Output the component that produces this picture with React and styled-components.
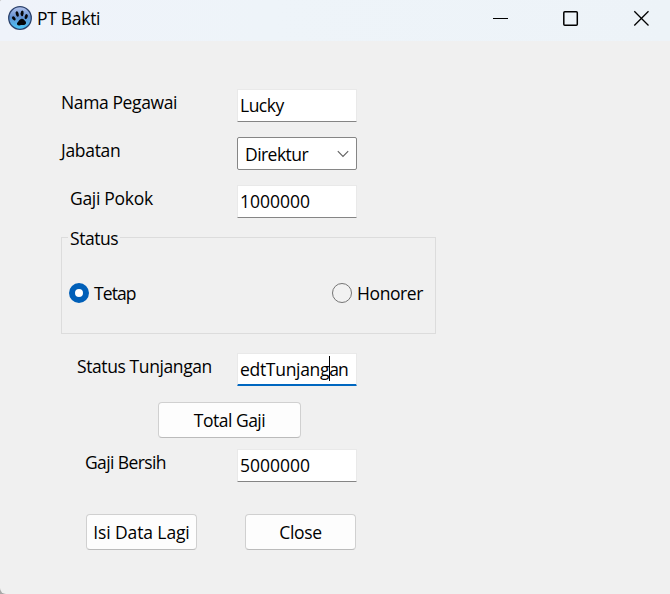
import React from "react";
import styled, { createGlobalStyle } from "styled-components";

const GlobalStyle = createGlobalStyle`
  *, *::before, *::after { box-sizing: border-box; }
  html, body { margin: 0; padding: 0; background: #a8a8a8; }
  body { font-family: "Open Sans", "Noto Sans", sans-serif; font-size: 17.5px; line-height: 24px; color: #000; }
`;

const Window = styled.div`
  width: 670px;
  height: 594px;
  background: #f0f0f0;
  border-radius: 2px 0 0 6px;
  overflow: hidden;
`;

const TitleBar = styled.header`
  display: flex;
  align-items: center;
  height: 41px;
  padding: 0 0 5px 8px;
  background: linear-gradient(90deg, #eff3fa, #eef4f9 40%, #edf3f8);
`;

const Text = styled.span`
  display: block;
  white-space: nowrap;
  letter-spacing: ${({ $track = -0.3 }) => $track}px;
`;

const Title = styled(Text)`
  flex: 1;
  margin-left: 5px;
`;

const Controls = styled.div`
  display: flex;
  margin-right: -6px;
`;

const Control = styled.button`
  display: flex;
  align-items: center;
  justify-content: center;
  width: 70px;
  height: 36px;
  padding: 0;
  border: 0;
  background: transparent;
`;

const Form = styled.main`
  display: flex;
  flex-direction: column;
  width: 436px;
  padding: 48px 0 0 61px;
`;

const Row = styled.div`
  display: flex;
  align-items: flex-start;
  height: 33px;
  margin-bottom: ${({ $after = 15 }) => $after}px;
`;

const LabelCell = styled.label`
  width: 176px;
  padding: 1px 0 0 ${({ $indent = 0 }) => $indent}px;
`;

const Field = styled.div`
  display: flex;
  align-items: flex-start;
  width: 120px;
  height: 33px;
  padding: 3px 0 0 2px;
  background: #fff;
  border: 1px solid #e9e9e9;
  border-bottom: ${({ $focused }) => ($focused ? "2px solid #0067c0" : "1px solid #858585")};
  border-radius: 1px;
`;

const Caret = styled.span`
  width: 1px;
  height: 25px;
  margin: -1px -1px 0 0;
  background: #000;
`;

const Combo = styled.div`
  display: flex;
  align-items: center;
  justify-content: space-between;
  width: 120px;
  height: 33px;
  padding: 0 7px 0 7px;
  background: #fff;
  border: 1px solid #868686;
  border-radius: 2px;
`;

const GroupBox = styled.fieldset`
  display: flex;
  flex-direction: column;
  height: 109px;
  min-width: 0;
  margin: -8px 0 19px;
  padding: 32px 12px 0 7px;
  border: 1px solid #dcdcdc;
`;

const Legend = styled.legend`
  height: 24px;
  margin-left: -1px;
  padding: 1px 2px 0;
`;

const RadioRow = styled.div`
  display: flex;
  justify-content: space-between;
`;

const Option = styled.label`
  display: flex;
  align-items: center;
  gap: 5px;
`;

const Radio = styled.span`
  width: 20px;
  height: 20px;
  margin-bottom: 1px;
  border-radius: 50%;
  border: ${({ $checked }) => ($checked ? "6px solid #005fb8" : "1px solid #757575")};
  background: ${({ $checked }) => ($checked ? "#fff" : "#f2f2f2")};
`;

const Button = styled.button`
  display: flex;
  align-items: center;
  justify-content: center;
  width: ${({ $width = 111 }) => $width}px;
  height: 36px;
  padding: 0;
  background: #fdfdfd;
  border: 1px solid #d0d0d0;
  border-bottom-color: #bbb;
  border-radius: 4px;
  font: inherit;
  color: #000;
`;

const TotalRow = styled.div`
  display: flex;
  padding-left: 97px;
  margin: 1px 0 11px;
`;

const Actions = styled.div`
  display: flex;
  gap: 48px;
  padding-left: 25px;
`;

const PawIcon = () => (
  <svg width="24" height="24" viewBox="0 0 24 24">
    <defs>
      <linearGradient id="orb" x1="0" y1="0" x2="0" y2="1">
        <stop offset="0" stopColor="#b4c3ec" />
        <stop offset="0.45" stopColor="#6490d0" />
        <stop offset="1" stopColor="#48c8fa" />
      </linearGradient>
    </defs>
    <circle cx="12" cy="12" r="11.3" fill="url(#orb)" stroke="#2b426c" strokeWidth="1.3" />
    <g fill="#050609">
      <ellipse cx="5.800" cy="12.400" rx="1.500" ry="2.300" transform="rotate(-40 5.800 12.400)" />
      <ellipse cx="9.200" cy="8" rx="1.500" ry="2.900" transform="rotate(-14 9.200 8)" />
      <ellipse cx="14.100" cy="7.300" rx="1.500" ry="2.900" transform="rotate(6 14.100 7.300)" />
      <ellipse cx="18.200" cy="10.600" rx="1.500" ry="2.600" transform="rotate(18 18.200 10.600)" />
      <path d="M13.500 12.800c2-.3 2.700 1.100 3.500 2 1.400 1.200 1.600 3.400-.3 4-1.400.4-2.400-.1-3.700.3-1.500.5-3.200.5-3.900-.6-.6-1.300.7-2.200 1.400-3.200.7-1 1.500-2.200 3-2.500z" />
    </g>
  </svg>
);

const MinimizeIcon = () => (
  <svg width="16" height="16" viewBox="0 0 16 16">
    <path d="M0 8.500h15" stroke="#000" fill="none" />
  </svg>
);

const MaximizeIcon = () => (
  <svg width="16" height="16" viewBox="0 0 16 16">
    <rect x="0.800" y="1.700" width="13.500" height="13.500" rx="1" stroke="#000" strokeWidth="1.500" fill="none" />
  </svg>
);

const CloseIcon = () => (
  <svg width="16" height="16" viewBox="0 0 16 16">
    <path d="M1.300 1.300l14.200 14.200M15.500 1.300L1.300 15.500" stroke="#000" strokeWidth="1.300" fill="none" />
  </svg>
);

const ChevronIcon = () => (
  <svg width="12" height="8" viewBox="0 0 12 8">
    <path d="M.8 1.200L6 6.400l5.200-5.200" stroke="#606060" strokeWidth="1.100" fill="none" />
  </svg>
);

export default function App() {
  return (
    <>
      <GlobalStyle />
      <Window>
        <TitleBar>
          <PawIcon />
          <Title>PT Bakti</Title>
          <Controls>
            <Control aria-label="Minimize"><MinimizeIcon /></Control>
            <Control aria-label="Maximize"><MaximizeIcon /></Control>
            <Control aria-label="Close window"><CloseIcon /></Control>
          </Controls>
        </TitleBar>
        <Form>
          <Row>
            <LabelCell><Text $track={-0.38}>Nama Pegawai</Text></LabelCell>
            <Field><Text $track={-0.5}>Lucky</Text></Field>
          </Row>
          <Row>
            <LabelCell><Text>Jabatan</Text></LabelCell>
            <Combo><Text $track={-0.55}>Direktur</Text><ChevronIcon /></Combo>
          </Row>
          <Row>
            <LabelCell $indent={9}><Text>Gaji Pokok</Text></LabelCell>
            <Field><Text $track={0}>1000000</Text></Field>
          </Row>
          <GroupBox>
            <Legend><Text $track={-0.45}>Status</Text></Legend>
            <RadioRow>
              <Option><Radio $checked /><Text $track={-0.9}>Tetap</Text></Option>
              <Option><Radio /><Text $track={-0.42}>Honorer</Text></Option>
            </RadioRow>
          </GroupBox>
          <Row>
            <LabelCell $indent={16}><Text $track={-0.4}>Status Tunjangan</Text></LabelCell>
            <Field $focused>
              <Text>edtTunjang</Text>
              <Caret />
              <Text $track={-0.9}>an</Text>
            </Field>
          </Row>
          <TotalRow><Button $width={143}><Text $track={-0.5}>Total Gaji</Text></Button></TotalRow>
          <Row $after={32}>
            <LabelCell $indent={24}><Text $track={-0.6}>Gaji Bersih</Text></LabelCell>
            <Field><Text $track={0}>5000000</Text></Field>
          </Row>
          <Actions>
            <Button><Text $track={-0.12}>Isi Data Lagi</Text></Button>
            <Button><Text>Close</Text></Button>
          </Actions>
        </Form>
      </Window>
    </>
  );
}
